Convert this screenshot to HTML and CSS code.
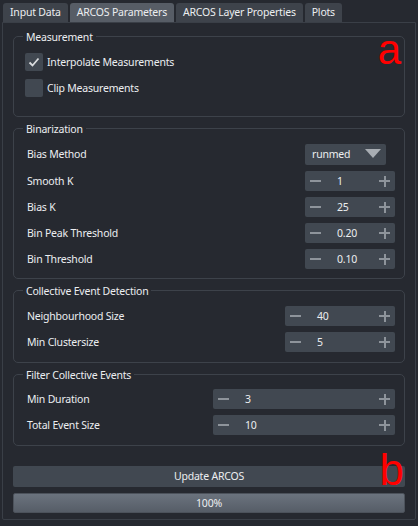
FILE: index.html
```html
<!DOCTYPE html>
<html>
<head>
<meta charset="utf-8">
<link rel="stylesheet" href="styles.css">
</head>
<body>
<div class="tabs">
  <div class="tab">Input Data</div>
  <div class="tab active">ARCOS Parameters</div>
  <div class="tab">ARCOS Layer Properties</div>
  <div class="tab">Plots</div>
</div>
<div class="panel">
  <div class="group g-meas">
    <span class="gtitle">Measurement</span>
    <span class="mark mark-a">a</span>
    <div class="crow">
      <span class="cbox"><svg width="18" height="18" viewBox="0 0 18 18"><path d="M4.5 9.5 L7.5 12.5 L13.5 5.5" fill="none" stroke="#d9dbde" stroke-width="1.8"/></svg></span>
      <span>Interpolate Measurements</span>
    </div>
    <div class="crow">
      <span class="cbox"></span>
      <span>Clip Measurements</span>
    </div>
  </div>

  <div class="group g-bin">
    <span class="gtitle">Binarization</span>
    <div class="row row-combo">
      <span class="lbl">Bias Method</span>
      <div class="combo"><span>runmed</span><svg width="16" height="9" viewBox="0 0 16 9"><path d="M0 0 H16 L8 9 Z" fill="#a8adb3"/></svg></div>
    </div>
    <div class="row"><span class="lbl">Smooth K</span><div class="spin w90"><span class="minus"></span><span class="val">1</span><span class="plus"></span></div></div>
    <div class="row"><span class="lbl">Bias K</span><div class="spin w90"><span class="minus"></span><span class="val">25</span><span class="plus"></span></div></div>
    <div class="row"><span class="lbl">Bin Peak Threshold</span><div class="spin w90"><span class="minus"></span><span class="val">0.20</span><span class="plus"></span></div></div>
    <div class="row"><span class="lbl">Bin Threshold</span><div class="spin w90"><span class="minus"></span><span class="val">0.10</span><span class="plus"></span></div></div>
  </div>

  <div class="group g-col">
    <span class="gtitle">Collective Event Detection</span>
    <div class="row"><span class="lbl">Neighbourhood Size</span><div class="spin w110"><span class="minus"></span><span class="val">40</span><span class="plus"></span></div></div>
    <div class="row"><span class="lbl">Min Clustersize</span><div class="spin w110"><span class="minus"></span><span class="val">5</span><span class="plus"></span></div></div>
  </div>

  <div class="group g-fil">
    <span class="gtitle">Filter Collective Events</span>
    <div class="row"><span class="lbl">Min Duration</span><div class="spin w182"><span class="minus"></span><span class="val">3</span><span class="plus"></span></div></div>
    <div class="row"><span class="lbl">Total Event Size</span><div class="spin w182"><span class="minus"></span><span class="val">10</span><span class="plus"></span></div></div>
  </div>

  <div class="actions">
    <div class="btn">Update ARCOS</div>
    <div class="progress">100%</div>
    <span class="mark mark-b">b</span>
  </div>
</div>
</body>
</html>
```

FILE: styles.css
```css
* { box-sizing: border-box; }
html, body {
  margin: 0;
  padding: 0;
  background: #262930;
  width: 418px;
  height: 526px;
  overflow: hidden;
}
body {
  font-family: "Noto Sans", "Open Sans", sans-serif;
  font-size: 10.5px;
  letter-spacing: -0.2px;
  color: #eceef0;
  padding: 3px 3px 0 2px;
}
.tabs {
  display: flex;
  gap: 2px;
  height: 19px;
  padding-left: 1px;
}
.tab {
  background: #3e434b;
  border-top-left-radius: 3px;
  border-top-right-radius: 3px;
  padding: 0 7px;
  line-height: 19px;
  height: 19px;
  white-space: nowrap;
}
.tab.active { background: #575d66; }
.panel {
  border: 1px solid #3a3f47;
  border-radius: 0 0 2px 2px;
  width: 414px;
  height: 498px;
  padding: 13px 10px 0 10px;
  display: flex;
  flex-direction: column;
  gap: 11px;
}
.group {
  position: relative;
  border: 1px solid #3d424a;
  border-radius: 5px;
  display: flex;
  flex-direction: column;
  gap: 6px;
  padding: 14px 9px 9px 13px;
}
.gtitle {
  position: absolute;
  top: -7px;
  left: 9px;
  padding: 0 3px 0 3px;
  background: #262930;
  line-height: 14px;
}
.g-meas { height: 81px; padding-top: 16px; gap: 8px; padding-left: 11px; }
.g-bin { height: 151px; }
.g-col { height: 73px; padding-top: 15px; }
.g-fil { height: 72px; }
.crow {
  display: flex;
  align-items: center;
  gap: 4px;
  height: 18px;
}
.cbox {
  width: 18px;
  height: 18px;
  background: #414851;
  border-radius: 2px;
  display: block;
}
.cbox svg { display: block; }
.row {
  display: flex;
  align-items: center;
  justify-content: space-between;
  height: 20px;
}
.row-combo { height: 22px; }
.lbl { white-space: nowrap; }
.combo {
  width: 81px;
  height: 21px;
  margin-right: 9px;
  background: #414851;
  border-radius: 2px;
  display: flex;
  align-items: center;
  justify-content: space-between;
  padding: 0 5px 0 7px;
}
.combo svg { display: block; margin-top: -2px; }
.spin {
  position: relative;
  height: 20px;
  background: #414851;
  border-radius: 2px;
  display: flex;
  align-items: center;
  padding-left: 32px;
}
.w90 { width: 90px; }
.w110 { width: 110px; }
.w182 { width: 182px; }
.minus, .plus {
  position: absolute;
  top: 9px;
  width: 11px;
  height: 2px;
  background: #8e949b;
}
.minus { left: 5px; }
.plus { right: 5px; }
.plus::after {
  content: "";
  position: absolute;
  left: 4.5px;
  top: -4.5px;
  width: 2px;
  height: 11px;
  background: #8e949b;
}
.val { line-height: 20px; }
.actions {
  position: relative;
  margin-top: 9px;
  display: flex;
  flex-direction: column;
  gap: 6px;
}
.btn {
  height: 21px;
  background: #414851;
  border-radius: 2px;
  text-align: center;
  line-height: 21px;
}
.progress {
  height: 20px;
  border-radius: 2px;
  background: linear-gradient(#6b737e, #565d67);
  border: 1px solid #4c525b;
  text-align: center;
  line-height: 18px;
}
.mark {
  position: absolute;
  color: #ff0000;
  font-family: "Liberation Sans", sans-serif;
  font-size: 42px;
  letter-spacing: 0;
  line-height: 1;
}
.mark-a { right: 3px; top: -8px; }
.mark-b { right: 1px; top: -18px; font-size: 44px; }
```
